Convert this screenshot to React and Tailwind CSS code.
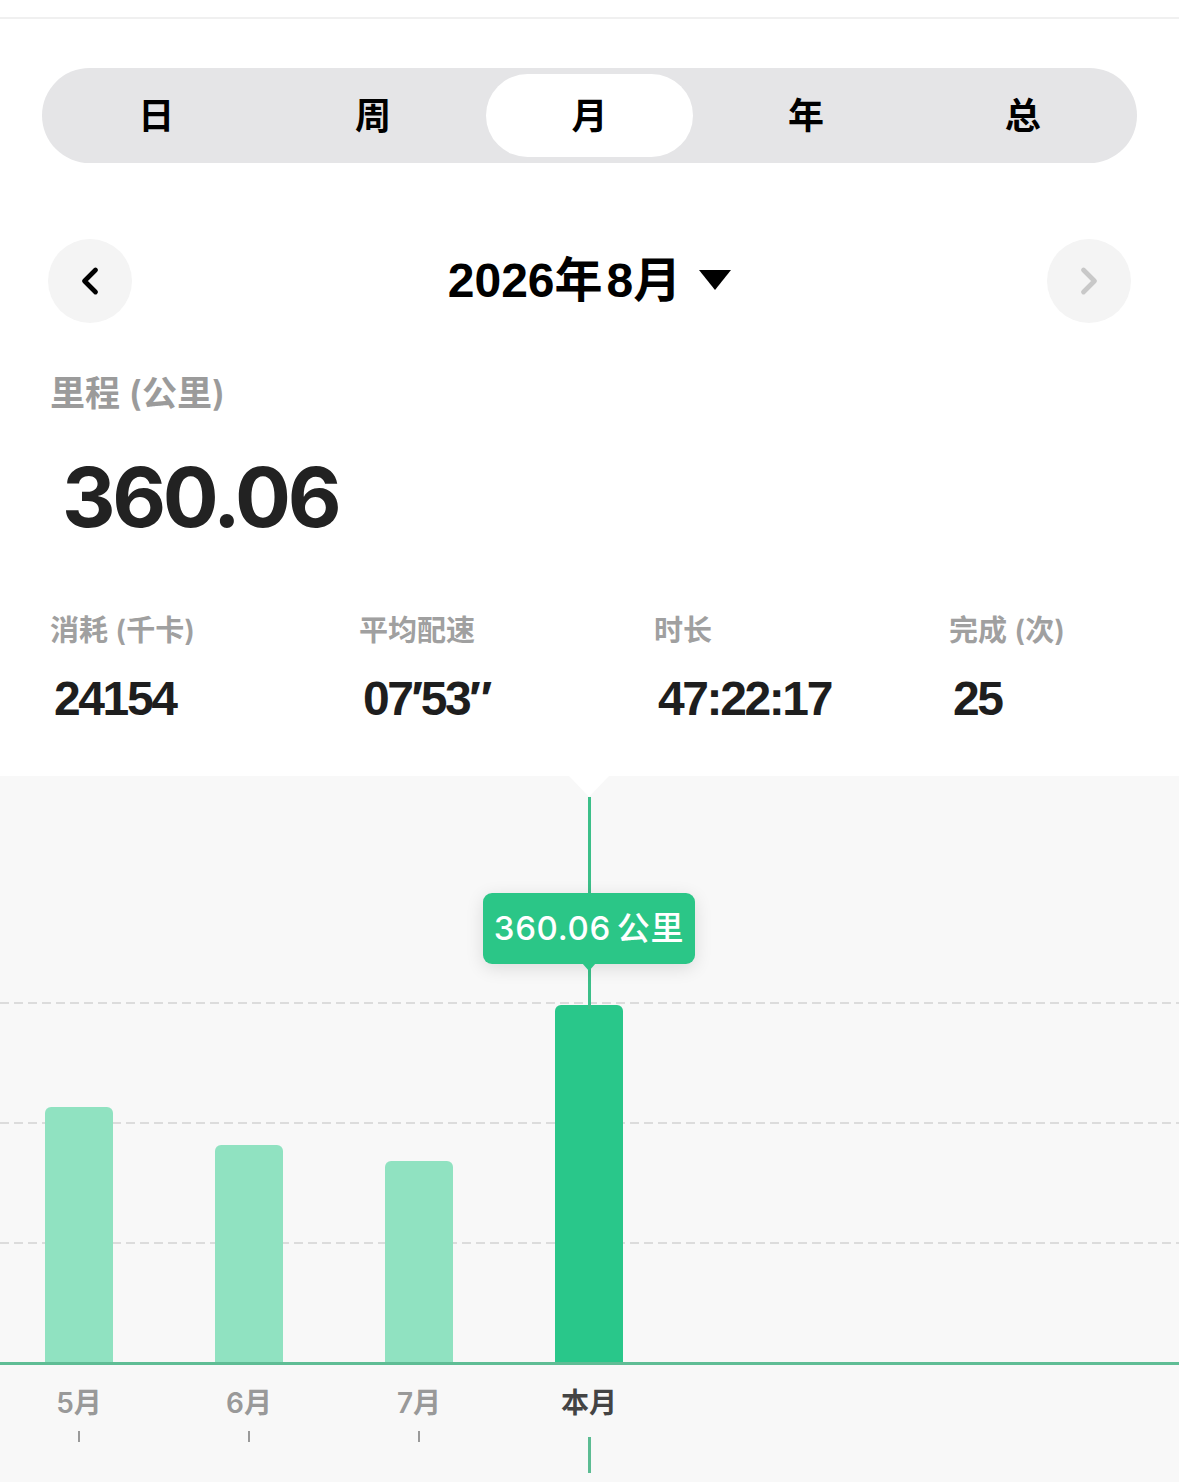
import { ChevronLeft, ChevronRight } from "lucide-react";

const TABS = ["日", "周", "月", "年", "总"];

const STATS = [
  { label: "消耗 (千卡)", value: "24154" },
  { label: "平均配速", value: "07′53″" },
  { label: "时长", value: "47:22:17" },
  { label: "完成 (次)", value: "25" },
];

// height in px above the baseline
const BARS = [
  { label: "5月", h: 255 },
  { label: "6月", h: 217 },
  { label: "7月", h: 201 },
  { label: "本月", h: 357, active: true },
];

const cjk = { fontFamily: 'Inter, "Noto Sans CJK SC", sans-serif' };
const tight = { fontFamily: '"Liberation Sans", "Noto Sans CJK SC", sans-serif' };

const App = () => {
  return (
    <div className="w-[1179px] min-h-[1482px] bg-white overflow-hidden" style={cjk}>
      <div className="h-[19px] border-b-2 border-[#f0f0f0]" />

      {/* 日 周 月 年 总 */}
      <div className="mx-[42px] mt-[49px] h-[95px] rounded-full bg-[#e5e5e7] p-[6px] grid grid-cols-5">
        {TABS.map((t, i) => (
          <div key={t} className="flex items-center justify-center px-[5px]">
            <div
              className={
                "w-full h-full flex items-center justify-center rounded-full text-[36px] font-semibold text-black " +
                (i === 2 ? "bg-white" : "")
              }
            >
              {t}
            </div>
          </div>
        ))}
      </div>

      {/* 月份切换 */}
      <div className="mx-[48px] mt-[76px] h-[84px] flex items-center justify-between">
        <button className="w-[84px] h-[84px] rounded-full bg-[#f4f4f4] flex items-center justify-center text-black">
          <ChevronLeft size={44} strokeWidth={2.6} />
        </button>
        <div className="flex items-center text-[48px] font-bold text-black" style={tight}>
          2026年<span className="ml-[4px]">8</span>月
          <svg width="32" height="22" viewBox="0 0 32 22" className="ml-[18px]">
            <polygon points="0,0 32,0 16,20" fill="#000" />
          </svg>
        </div>
        <button className="w-[84px] h-[84px] rounded-full bg-[#f4f4f4] flex items-center justify-center text-[#c8c8c8]">
          <ChevronRight size={44} strokeWidth={2.6} />
        </button>
      </div>

      {/* 里程 */}
      <div className="ml-[50px] mt-[48px] text-[35px] leading-[44px] font-semibold text-[#9b9b9b]">
        里程 (公里)
      </div>
      <div
        className="ml-[62px] mt-[41px] text-[83px] leading-none font-bold tracking-[-0.04em] text-[#222]"
        style={{ fontFamily: "Inter, sans-serif" }}
      >
        360.06
      </div>

      {/* 统计 */}
      <div className="mt-[74px] pl-[50px] grid grid-cols-[309px_295px_295px_1fr]">
        {STATS.map((s) => (
          <div key={s.label}>
            <div className="text-[29px] leading-[36px] font-semibold text-[#a0a0a0]">{s.label}</div>
            <div
              className="mt-[26px] ml-[4px] text-[48px] leading-none font-bold tracking-[-0.05em] text-[#1e1e1e]"
              style={tight}
            >
              {s.value}
            </div>
          </div>
        ))}
      </div>

      {/* 图表 */}
      <div className="relative mt-[53px] h-[706px] bg-[#f8f8f8]">
        {/* 顶部缺口 */}
        <svg width="40" height="22" viewBox="0 0 40 22" className="absolute left-[569px] top-0">
          <polygon points="0,0 40,0 20,21" fill="#fff" />
        </svg>

        <div className="relative h-[589px] border-b-[3px] border-[#5fbd95]">
          <svg className="absolute inset-0" width="1179" height="589">
            {[227, 347, 467].map((y) => (
              <line
                key={y}
                x1="0"
                x2="1179"
                y1={y}
                y2={y}
                stroke="#dcdcdc"
                strokeWidth="2"
                strokeDasharray="9 5"
              />
            ))}
          </svg>

          <div className="relative h-full flex items-end pl-[45px] gap-[102px]">
            {BARS.map((b) => (
              <div
                key={b.label}
                className={
                  "w-[68px] rounded-t-[6px] " + (b.active ? "bg-[#29c78a]" : "bg-[#90e2c1]")
                }
                style={{ height: b.h }}
              />
            ))}
          </div>

          {/* 选中线 */}
          <div className="absolute left-[588px] top-[21px] w-[3px] h-[212px] bg-[#3cbf89]" />

          {/* 提示框 */}
          <div className="absolute left-[483px] top-[117px] w-[212px] h-[71px] rounded-[9px] bg-[#2bc687] shadow-[0_4px_18px_rgba(0,0,0,0.12)] flex items-center justify-center text-white text-[33px] font-medium tracking-[0.02em]">
            360.06<span className="ml-[6px]">公里</span>
            <svg width="14" height="8" viewBox="0 0 14 8" className="absolute left-[99px] -bottom-[7px]">
              <polygon points="0,0 14,0 7,8" fill="#2bc687" />
            </svg>
          </div>
        </div>

        {/* 横轴 */}
        <div className="flex pl-[45px] gap-[102px] mt-[20px]">
          {BARS.map((b) => (
            <div key={b.label} className="w-[68px] flex flex-col items-center">
              <div
                className={
                  "text-[28px] leading-[36px] font-semibold whitespace-nowrap " +
                  (b.active ? "text-[#444]" : "text-[#999]")
                }
              >
                {b.label}
              </div>
              {b.active ? (
                <div className="mt-[16px] w-[3px] h-[36px] bg-[#5cbc93]" />
              ) : (
                <div className="mt-[10px] w-[2px] h-[11px] bg-[#9a9a9a]" />
              )}
            </div>
          ))}
        </div>
      </div>
    </div>
  );
};

export default App;
